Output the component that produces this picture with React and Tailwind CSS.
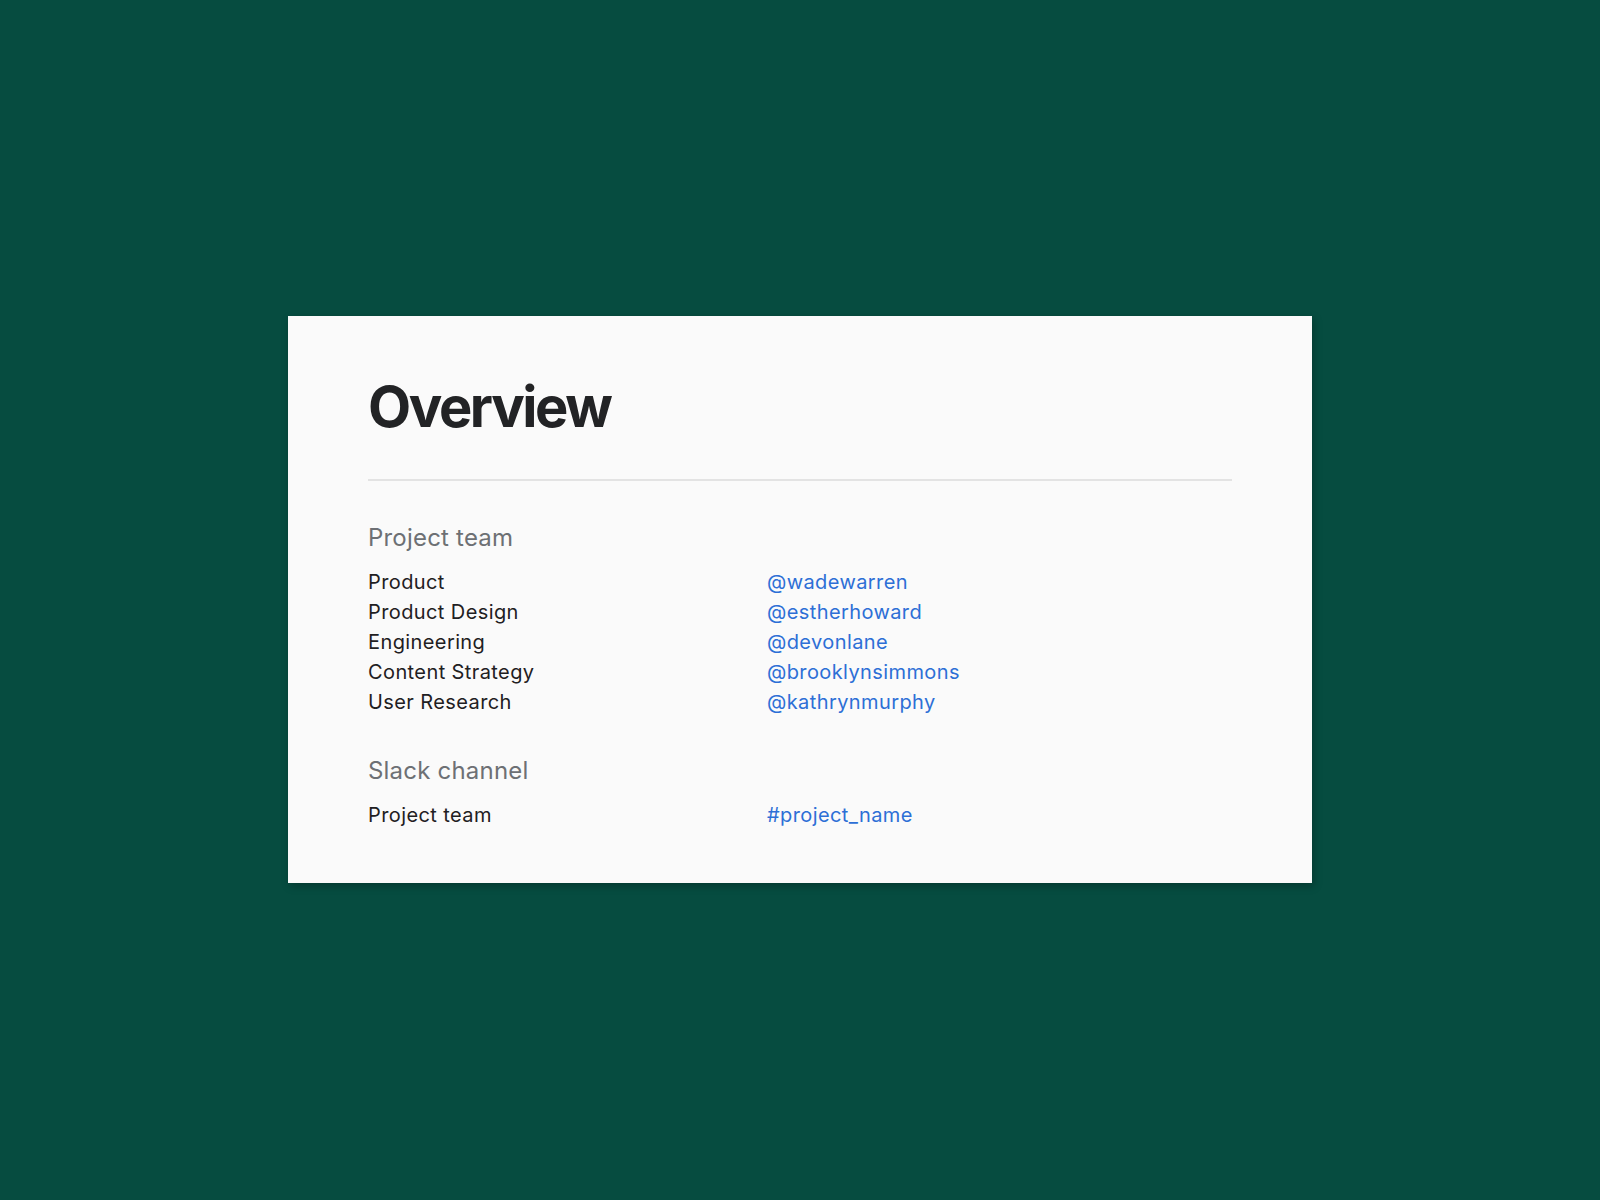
const team = [
  ['Product', '@wadewarren'],
  ['Product Design', '@estherhoward'],
  ['Engineering', '@devonlane'],
  ['Content Strategy', '@brooklynsimmons'],
  ['User Research', '@kathrynmurphy'],
]

function Row({ label, value }) {
  return (
    <div className="grid grid-cols-[399px_1fr] text-[20px] leading-[30px] tracking-[0.4px]">
      <span className="text-[#1f2022]">{label}</span>
      <span className="text-[#2d6fd6]">{value}</span>
    </div>
  )
}

export default function App() {
  return (
    <div className="min-h-screen bg-[#064c40] flex items-start justify-center pt-[316px] font-['Inter',sans-serif]">
      <div className="w-[1024px] bg-[#fafafa] px-20 pt-[57px] pb-[53px] shadow-[2px_3px_8px_rgba(0,0,0,0.25)]">
        <h1 className="text-[56px] leading-[68px] font-bold text-[#222325] tracking-[-2.4px]">Overview</h1>
        <div className="mt-[38px] h-[2px] bg-[#e3e3e3]" />

        <h2 className="mt-[41px] text-[24px] leading-[32px] text-[#6d7074] tracking-[0.2px]">Project team</h2>
        <div className="mt-[13px]">
          {team.map(([label, value]) => (
            <Row key={label} label={label} value={value} />
          ))}
        </div>

        <h2 className="mt-[38px] text-[24px] leading-[32px] text-[#6d7074] tracking-[0.2px]">Slack channel</h2>
        <div className="mt-[13px]">
          <Row label="Project team" value="#project_name" />
        </div>
      </div>
    </div>
  )
}
